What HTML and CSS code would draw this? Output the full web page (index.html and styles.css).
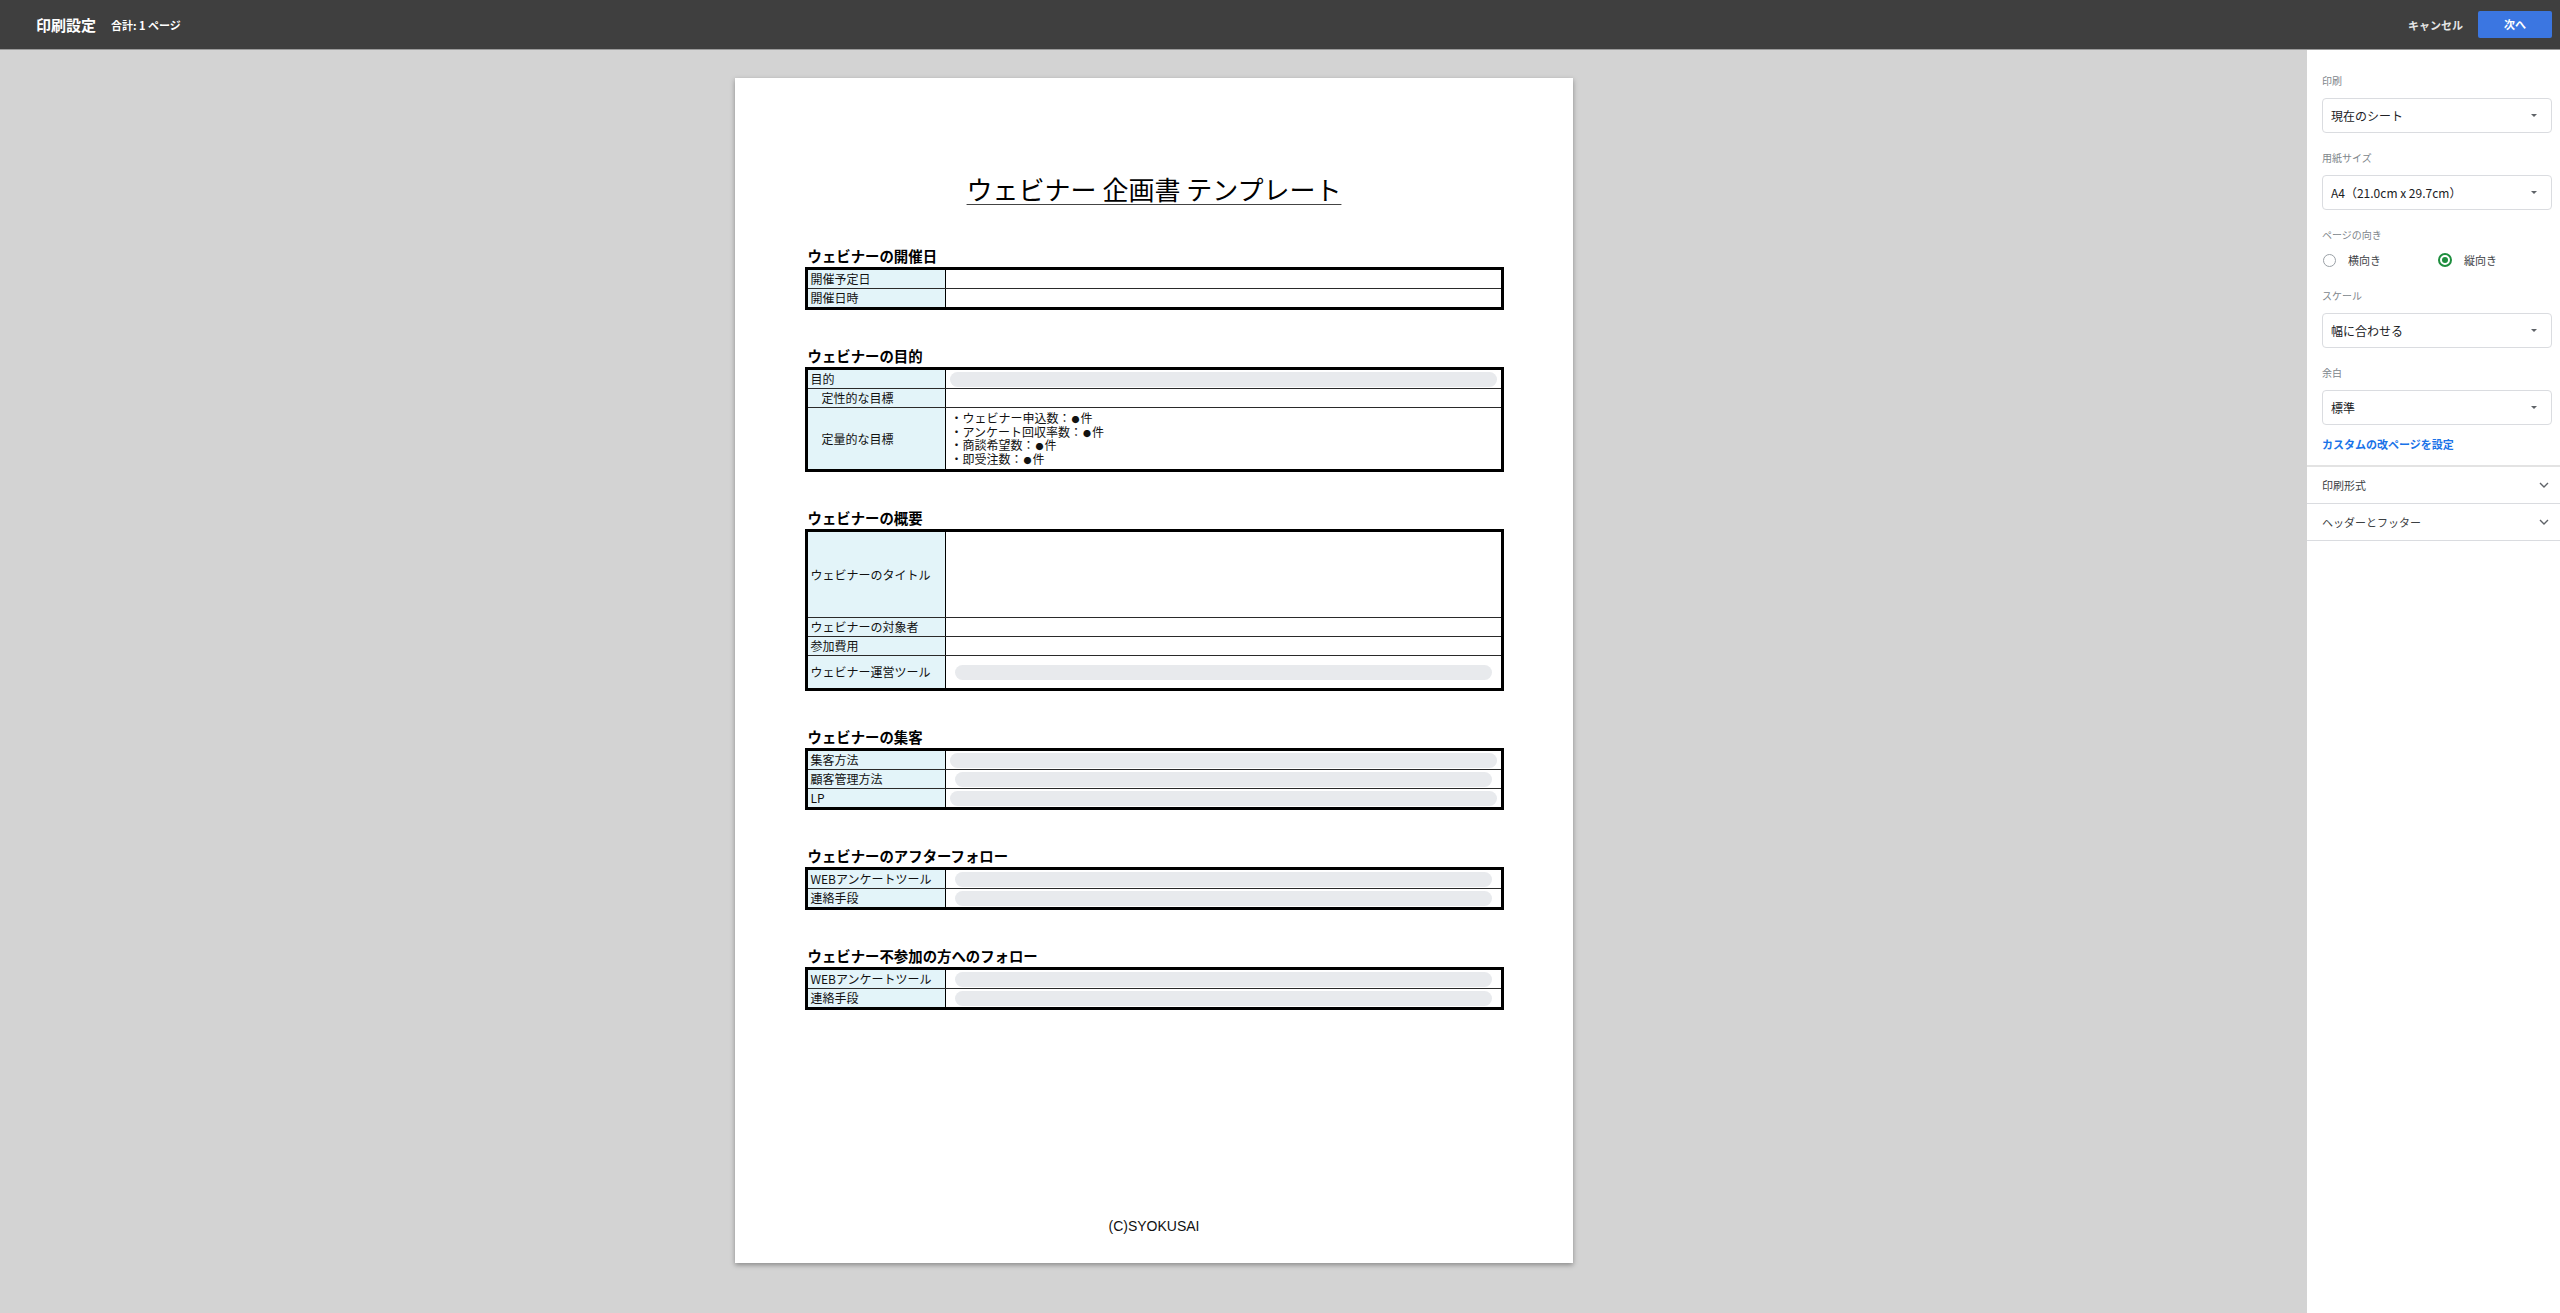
FILE: index.html
```html
<!DOCTYPE html>
<html lang="ja">
<head>
<meta charset="utf-8">
<title>印刷設定</title>
<link rel="stylesheet" href="styles.css">
</head>
<body>
<header class="topbar">
  <div class="topbar-left">
    <span class="app-title">印刷設定</span>
    <span class="page-count">合計: 1 ページ</span>
  </div>
  <div class="topbar-right">
    <button class="btn-cancel">キャンセル</button>
    <button class="btn-next">次へ</button>
  </div>
</header>
<div class="workspace">
  <main class="preview">
    <div class="sheet">
      <h1 class="doc-title">ウェビナー 企画書 テンプレート</h1>

      <section class="block">
        <h2 class="block-title">ウェビナーの開催日</h2>
        <div class="grid-table">
          <div class="row"><div class="label">開催予定日</div><div class="value"></div></div>
          <div class="row"><div class="label">開催日時</div><div class="value"></div></div>
        </div>
      </section>

      <section class="block">
        <h2 class="block-title">ウェビナーの目的</h2>
        <div class="grid-table">
          <div class="row"><div class="label">目的</div><div class="value"><span class="pill"></span></div></div>
          <div class="row"><div class="label indent">定性的な目標</div><div class="value"></div></div>
          <div class="row row-list"><div class="label indent">定量的な目標</div>
            <div class="value value-list">
              <div>・ウェビナー申込数：<span class="dot">●</span>件</div>
              <div>・アンケート回収率数：<span class="dot">●</span>件</div>
              <div>・商談希望数：<span class="dot">●</span>件</div>
              <div>・即受注数：<span class="dot">●</span>件</div>
            </div>
          </div>
        </div>
      </section>

      <section class="block">
        <h2 class="block-title">ウェビナーの概要</h2>
        <div class="grid-table">
          <div class="row row-title"><div class="label">ウェビナーのタイトル</div><div class="value"></div></div>
          <div class="row"><div class="label">ウェビナーの対象者</div><div class="value"></div></div>
          <div class="row"><div class="label">参加費用</div><div class="value"></div></div>
          <div class="row row-tool"><div class="label">ウェビナー運営ツール</div><div class="value"><span class="pill inset"></span></div></div>
        </div>
      </section>

      <section class="block">
        <h2 class="block-title">ウェビナーの集客</h2>
        <div class="grid-table">
          <div class="row"><div class="label">集客方法</div><div class="value"><span class="pill"></span></div></div>
          <div class="row"><div class="label">顧客管理方法</div><div class="value"><span class="pill inset"></span></div></div>
          <div class="row"><div class="label">LP</div><div class="value"><span class="pill"></span></div></div>
        </div>
      </section>

      <section class="block">
        <h2 class="block-title">ウェビナーのアフターフォロー</h2>
        <div class="grid-table">
          <div class="row"><div class="label">WEBアンケートツール</div><div class="value"><span class="pill inset"></span></div></div>
          <div class="row"><div class="label">連絡手段</div><div class="value"><span class="pill inset"></span></div></div>
        </div>
      </section>

      <section class="block">
        <h2 class="block-title">ウェビナー不参加の方へのフォロー</h2>
        <div class="grid-table">
          <div class="row"><div class="label">WEBアンケートツール</div><div class="value"><span class="pill inset"></span></div></div>
          <div class="row"><div class="label">連絡手段</div><div class="value"><span class="pill inset"></span></div></div>
        </div>
      </section>

      <footer class="sheet-footer">(C)SYOKUSAI</footer>
    </div>
  </main>

  <aside class="settings">
    <div class="field">
      <div class="field-label">印刷</div>
      <div class="select"><span>現在のシート</span><span class="caret"></span></div>
    </div>
    <div class="field">
      <div class="field-label">用紙サイズ</div>
      <div class="select"><span>A4（21.0cm x 29.7cm）</span><span class="caret"></span></div>
    </div>
    <div class="field field-radio">
      <div class="field-label">ページの向き</div>
      <div class="radios">
        <div class="radio"><span class="radio-circle"></span><span>横向き</span></div>
        <div class="radio"><span class="radio-circle checked"></span><span>縦向き</span></div>
      </div>
    </div>
    <div class="field">
      <div class="field-label">スケール</div>
      <div class="select"><span>幅に合わせる</span><span class="caret"></span></div>
    </div>
    <div class="field field-last">
      <div class="field-label">余白</div>
      <div class="select"><span>標準</span><span class="caret"></span></div>
    </div>
    <div class="custom-link">カスタムの改ページを設定</div>
    <div class="accordion-group">
      <div class="acc"><span>印刷形式</span>
        <svg class="chev" width="10" height="6" viewBox="0 0 10 6"><polyline points="1,1 5,5 9,1" fill="none" stroke="#5f6368" stroke-width="1.4"/></svg>
      </div>
      <div class="acc"><span>ヘッダーとフッター</span>
        <svg class="chev" width="10" height="6" viewBox="0 0 10 6"><polyline points="1,1 5,5 9,1" fill="none" stroke="#5f6368" stroke-width="1.4"/></svg>
      </div>
    </div>
  </aside>
</div>
</body>
</html>
```

FILE: styles.css
```css
html, body {
  margin: 0;
  height: 100%;
}
body {
  font-family: "Noto Sans CJK JP", "Noto Sans", sans-serif;
  overflow: hidden;
  background: #d3d3d3;
}

/* top bar */
.topbar {
  height: 50px;
  background: #3f3f3f;
  display: flex;
  align-items: center;
  justify-content: space-between;
  box-sizing: border-box;
  padding: 0 8px 0 36px;
  border-bottom: 1px solid #9a9a9a;
}
.topbar-left {
  display: flex;
  align-items: center;
}
.app-title {
  color: #fff;
  font-size: 15px;
  line-height: 20px;
  font-weight: 700;
}
.page-count {
  color: #fff;
  font-size: 11px;
  font-weight: 700;
  margin-left: 15px;
}
.topbar-right {
  display: flex;
  align-items: center;
}
.btn-cancel {
  background: none;
  border: 0;
  padding: 0;
  margin-right: 15px;
  color: #e6e6e6;
  font-family: "Noto Sans CJK JP", sans-serif;
  font-size: 11px;
  font-weight: 700;
}
.btn-next {
  width: 74px;
  height: 27px;
  border: 0;
  border-radius: 2px;
  background: #3b76e1;
  color: #fff;
  font-family: "Noto Sans CJK JP", sans-serif;
  font-size: 11px;
  font-weight: 700;
  margin-top: -1px;
}

/* workspace */
.workspace {
  display: flex;
  height: 1263px;
}
.preview {
  flex: 1;
  display: flex;
  justify-content: center;
  align-items: flex-start;
  padding-top: 28px;
  background: #d3d3d3;
}
.sheet {
  width: 838px;
  height: 1185px;
  background: #fff;
  box-shadow: 0 2px 5px rgba(0, 0, 0, 0.35);
  box-sizing: border-box;
  padding: 93px 69px 27px 70px;
  display: flex;
  flex-direction: column;
  color: #111;
}
.doc-title {
  margin: 0 0 3px;
  font-size: 26px;
  line-height: 36px;
  font-weight: 400;
  text-align: center;
  text-decoration: underline;
  text-decoration-thickness: 1px;
  text-underline-offset: 4px;
  text-decoration-color: #444;
  color: #000;
}
.block {
  margin-top: 36px;
}
.block-title {
  margin: 0 0 1px 3px;
  font-size: 14.4px;
  line-height: 20px;
  font-weight: 700;
  color: #000;
}
.grid-table {
  border: 3px solid #000;
}
.row {
  display: flex;
  height: 18px;
}
.row + .row {
  border-top: 1px solid #2a2a2a;
}
.row-list {
  height: 61px;
}
.row-title {
  height: 85px;
}
.row-tool {
  height: 32px;
}
.label {
  width: 138px;
  flex: none;
  box-sizing: border-box;
  background: #e3f4f9;
  border-right: 1px solid #000;
  padding-left: 3px;
  font-size: 12px;
  line-height: 18px;
  color: #111;
  white-space: nowrap;
  display: flex;
  align-items: center;
}
.label.indent {
  padding-left: 14px;
}
.value {
  flex: 1;
  display: flex;
  align-items: center;
}
.value-list {
  display: block;
  padding: 3px 0 0 5px;
  font-size: 12px;
  line-height: 13.7px;
  color: #111;
}
.dot {
  font-size: 8px;
  line-height: 0;
  margin: 0 1px;
}
.pill {
  flex: 1;
  height: 15px;
  margin: 0 4px;
  border-radius: 8px;
  background: #e8eaed;
}
.pill.inset {
  margin: 0 9px;
}
.sheet-footer {
  margin-top: auto;
  text-align: center;
  font-family: "Liberation Sans", Arial, sans-serif;
  font-size: 14px;
  line-height: 20px;
  color: #111;
}

/* settings panel */
.settings {
  width: 253px;
  flex: none;
  background: #fff;
  box-sizing: border-box;
  padding-top: 24px;
}
.field {
  padding: 0 8px 0 15px;
  margin-bottom: 18px;
}
.field-label {
  font-size: 10px;
  line-height: 14px;
  color: #80868b;
  margin-bottom: 10px;
}
.select {
  height: 35px;
  box-sizing: border-box;
  border: 1px solid #dadce0;
  border-radius: 4px;
  display: flex;
  align-items: center;
  justify-content: space-between;
  padding: 0 14px 0 8px;
  font-size: 12px;
  color: #202124;
}
.caret {
  width: 0;
  height: 0;
  border-left: 3px solid transparent;
  border-right: 3px solid transparent;
  border-top: 3px solid #5f6368;
}
.field-radio {
  margin-bottom: 22px;
}
.field-radio .field-label {
  margin-bottom: 11px;
}
.field-last {
  margin-bottom: 12px;
}
.radios {
  display: flex;
}
.radio {
  width: 115px;
  display: flex;
  align-items: center;
  gap: 12px;
  font-size: 11px;
  line-height: 14px;
  color: #3c4043;
}
.radio-circle {
  width: 13px;
  height: 13px;
  box-sizing: border-box;
  border-radius: 50%;
  border: 1.5px solid #9aa0a6;
  margin-left: 1px;
  display: flex;
  align-items: center;
  justify-content: center;
}
.radio-circle.checked {
  width: 14px;
  height: 14px;
  border: 2px solid #1e8e3e;
}
.radio-circle.checked::after {
  content: "";
  width: 6px;
  height: 6px;
  border-radius: 50%;
  background: #1e8e3e;
}
.custom-link {
  padding-left: 15px;
  font-size: 11px;
  line-height: 14px;
  font-weight: 700;
  color: #1a73e8;
}
.accordion-group {
  margin-top: 14px;
  border-top: 2px solid #e3e3e3;
}
.acc {
  height: 36px;
  display: flex;
  align-items: center;
  justify-content: space-between;
  padding: 0 11px 0 15px;
  border-bottom: 1px solid #dadce0;
  font-size: 11px;
  color: #3c4043;
}
.chev {
  display: block;
}
```
